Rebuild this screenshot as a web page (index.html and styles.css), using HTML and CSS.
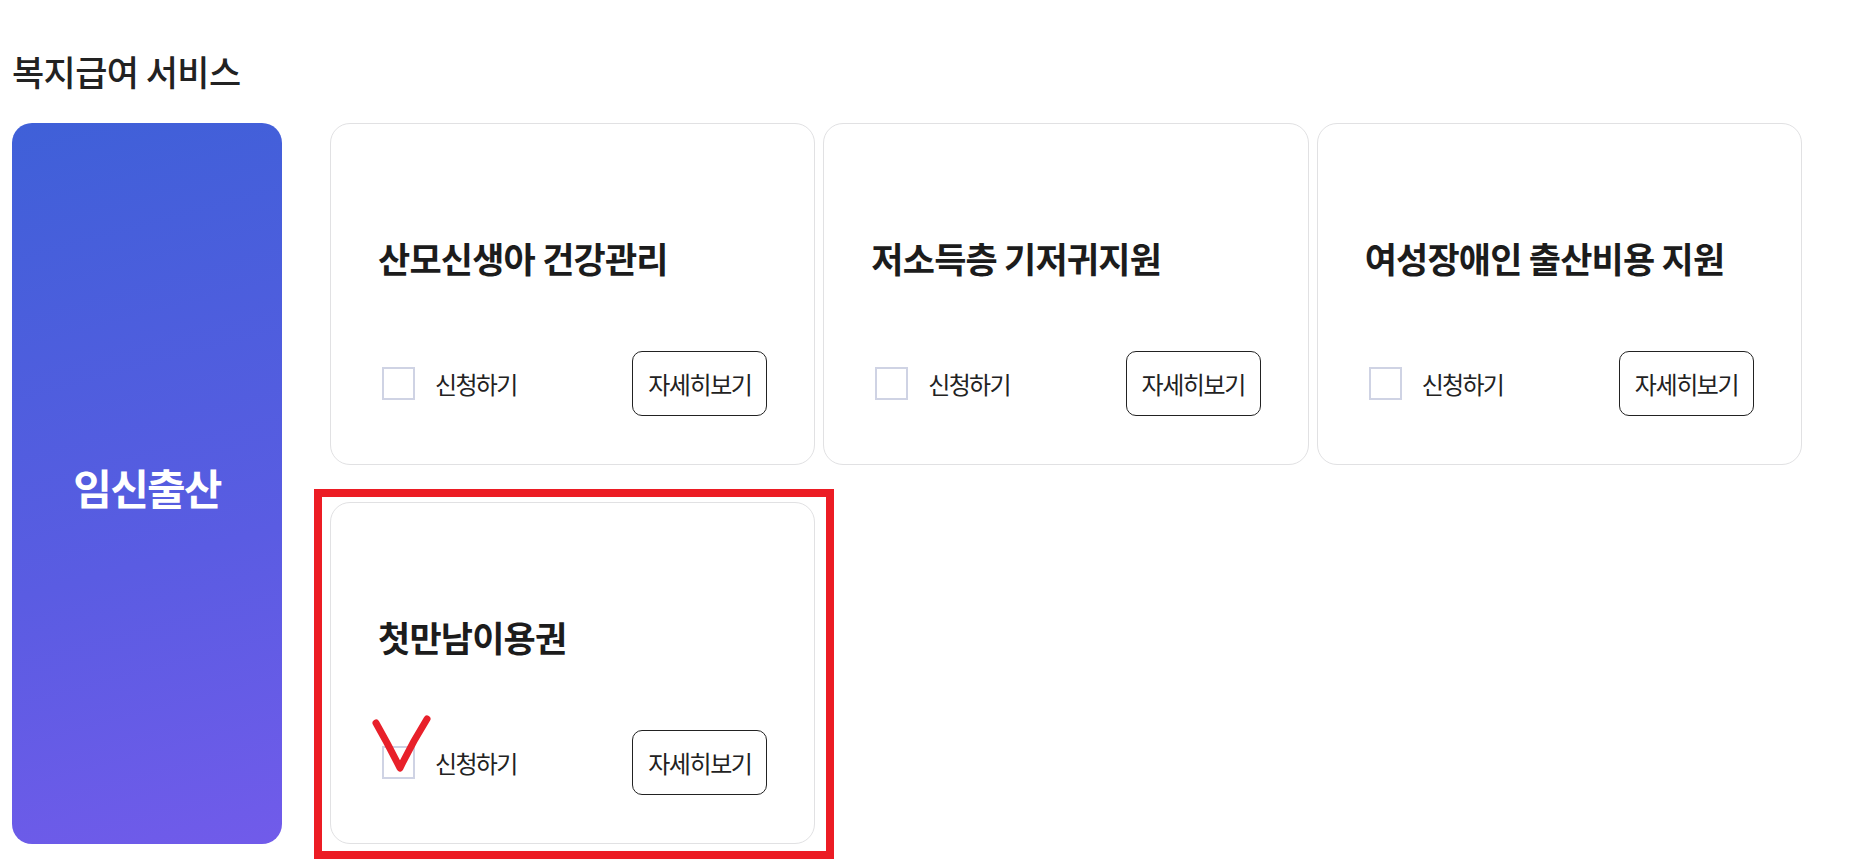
FILE: index.html
```html
<!DOCTYPE html>
<html>

<head>
    <meta charset="utf-8">
    <meta name="viewport" content="width=device-width">
    <title>복지급여 서비스</title>
    <link rel="stylesheet" href="styles.css">
</head>

<body>
    <div id="container">

        <h2 class="section-title">복지급여 서비스</h2>

        <div class="section">

            <div class="category">임신출산</div>

            <div class="card-grid">

                <div class="card">
                    <h3 class="card-title">산모신생아 건강관리</h3>
                    <div class="card-foot">
                        <label class="apply">
                            <input type="checkbox" class="apply-box">
                            <span>신청하기</span>
                        </label>
                        <button class="detail-btn">자세히보기</button>
                    </div>
                </div>

                <div class="card">
                    <h3 class="card-title">저소득층 기저귀지원</h3>
                    <div class="card-foot">
                        <label class="apply">
                            <input type="checkbox" class="apply-box">
                            <span>신청하기</span>
                        </label>
                        <button class="detail-btn">자세히보기</button>
                    </div>
                </div>

                <div class="card">
                    <h3 class="card-title">여성장애인 출산비용 지원</h3>
                    <div class="card-foot">
                        <label class="apply">
                            <input type="checkbox" class="apply-box">
                            <span>신청하기</span>
                        </label>
                        <button class="detail-btn">자세히보기</button>
                    </div>
                </div>

                <div class="card marked">
                    <h3 class="card-title">첫만남이용권</h3>
                    <div class="card-foot">
                        <label class="apply">
                            <input type="checkbox" class="apply-box">
                            <span>신청하기</span>
                        </label>
                        <button class="detail-btn">자세히보기</button>
                    </div>

                    <!-- review marks drawn over the card -->
                    <div class="mark-box"></div>
                    <svg class="mark-check" width="80" height="70" viewBox="0 0 80 70">
                        <path d="M15 15 Q27 36 39 60 Q51 35 66 11" fill="none" stroke="#e8202a" stroke-width="7" stroke-linecap="round" stroke-linejoin="round"/>
                    </svg>
                </div>

            </div>
        </div>

    </div>
</body>

</html>
```

FILE: styles.css
```css
body {
    margin: 0;
    background: #fff;
    color: #222;
    font-family: "Noto Sans CJK KR", "Noto Sans", sans-serif;
}

#container {
    padding: 47px 12px 21px 12px;
}

.section-title {
    margin: 0 0 29px 0;
    font-size: 35px;
    font-weight: 500;
    line-height: 47px;
    letter-spacing: -0.6px;
    color: #222;
}

.section {
    display: flex;
    gap: 48px;
}

.category {
    width: 270px;
    flex-shrink: 0;
    border-radius: 20px;
    background: linear-gradient(165deg, #3f60d8 0%, #5a5ce2 60%, #715bea 100%);
    color: #fff;
    display: flex;
    align-items: center;
    justify-content: center;
    font-size: 42px;
    font-weight: 700;
    letter-spacing: -1.8px;
    padding-top: 6px;
    box-sizing: border-box;
}

.card-grid {
    width: 1472px;
    display: grid;
    grid-template-columns: repeat(3, 1fr);
    grid-auto-rows: 342px;
    column-gap: 8px;
    row-gap: 37px;
}

.card {
    box-sizing: border-box;
    border: 1px solid #e1e1e3;
    border-radius: 20px;
    padding: 0 47px 48px 47px;
    display: flex;
    flex-direction: column;
}

.card-title {
    margin: 111px 0 0 0;
    font-size: 35px;
    font-weight: 700;
    line-height: 46px;
    letter-spacing: -0.8px;
    color: #1c1c1c;
}

.card-foot {
    margin-top: auto;
    display: flex;
    align-items: center;
    justify-content: space-between;
}

.apply {
    display: flex;
    align-items: center;
    gap: 20px;
    font-size: 24px;
    letter-spacing: -1.7px;
    color: #222;
}

.apply-box {
    appearance: none;
    -webkit-appearance: none;
    margin: 0 0 0 4px;
    width: 33px;
    height: 33px;
    border: 2px solid #cfd3e4;
    background: #fff;
    box-sizing: border-box;
}

.detail-btn {
    width: 135px;
    height: 65px;
    border: 1px solid #222;
    border-radius: 10px;
    background: #fff;
    color: #222;
    font-family: "Noto Sans CJK KR", "Noto Sans", sans-serif;
    font-size: 24px;
    letter-spacing: -1.4px;
    padding: 0;
    cursor: pointer;
}

.marked {
    position: relative;
}

.mark-box {
    position: absolute;
    left: -17px;
    top: -14px;
    right: -20px;
    bottom: -16px;
    border: 8px solid #ec1c24;
    pointer-events: none;
}

.mark-check {
    position: absolute;
    left: 30px;
    top: 205px;
    pointer-events: none;
}
```
